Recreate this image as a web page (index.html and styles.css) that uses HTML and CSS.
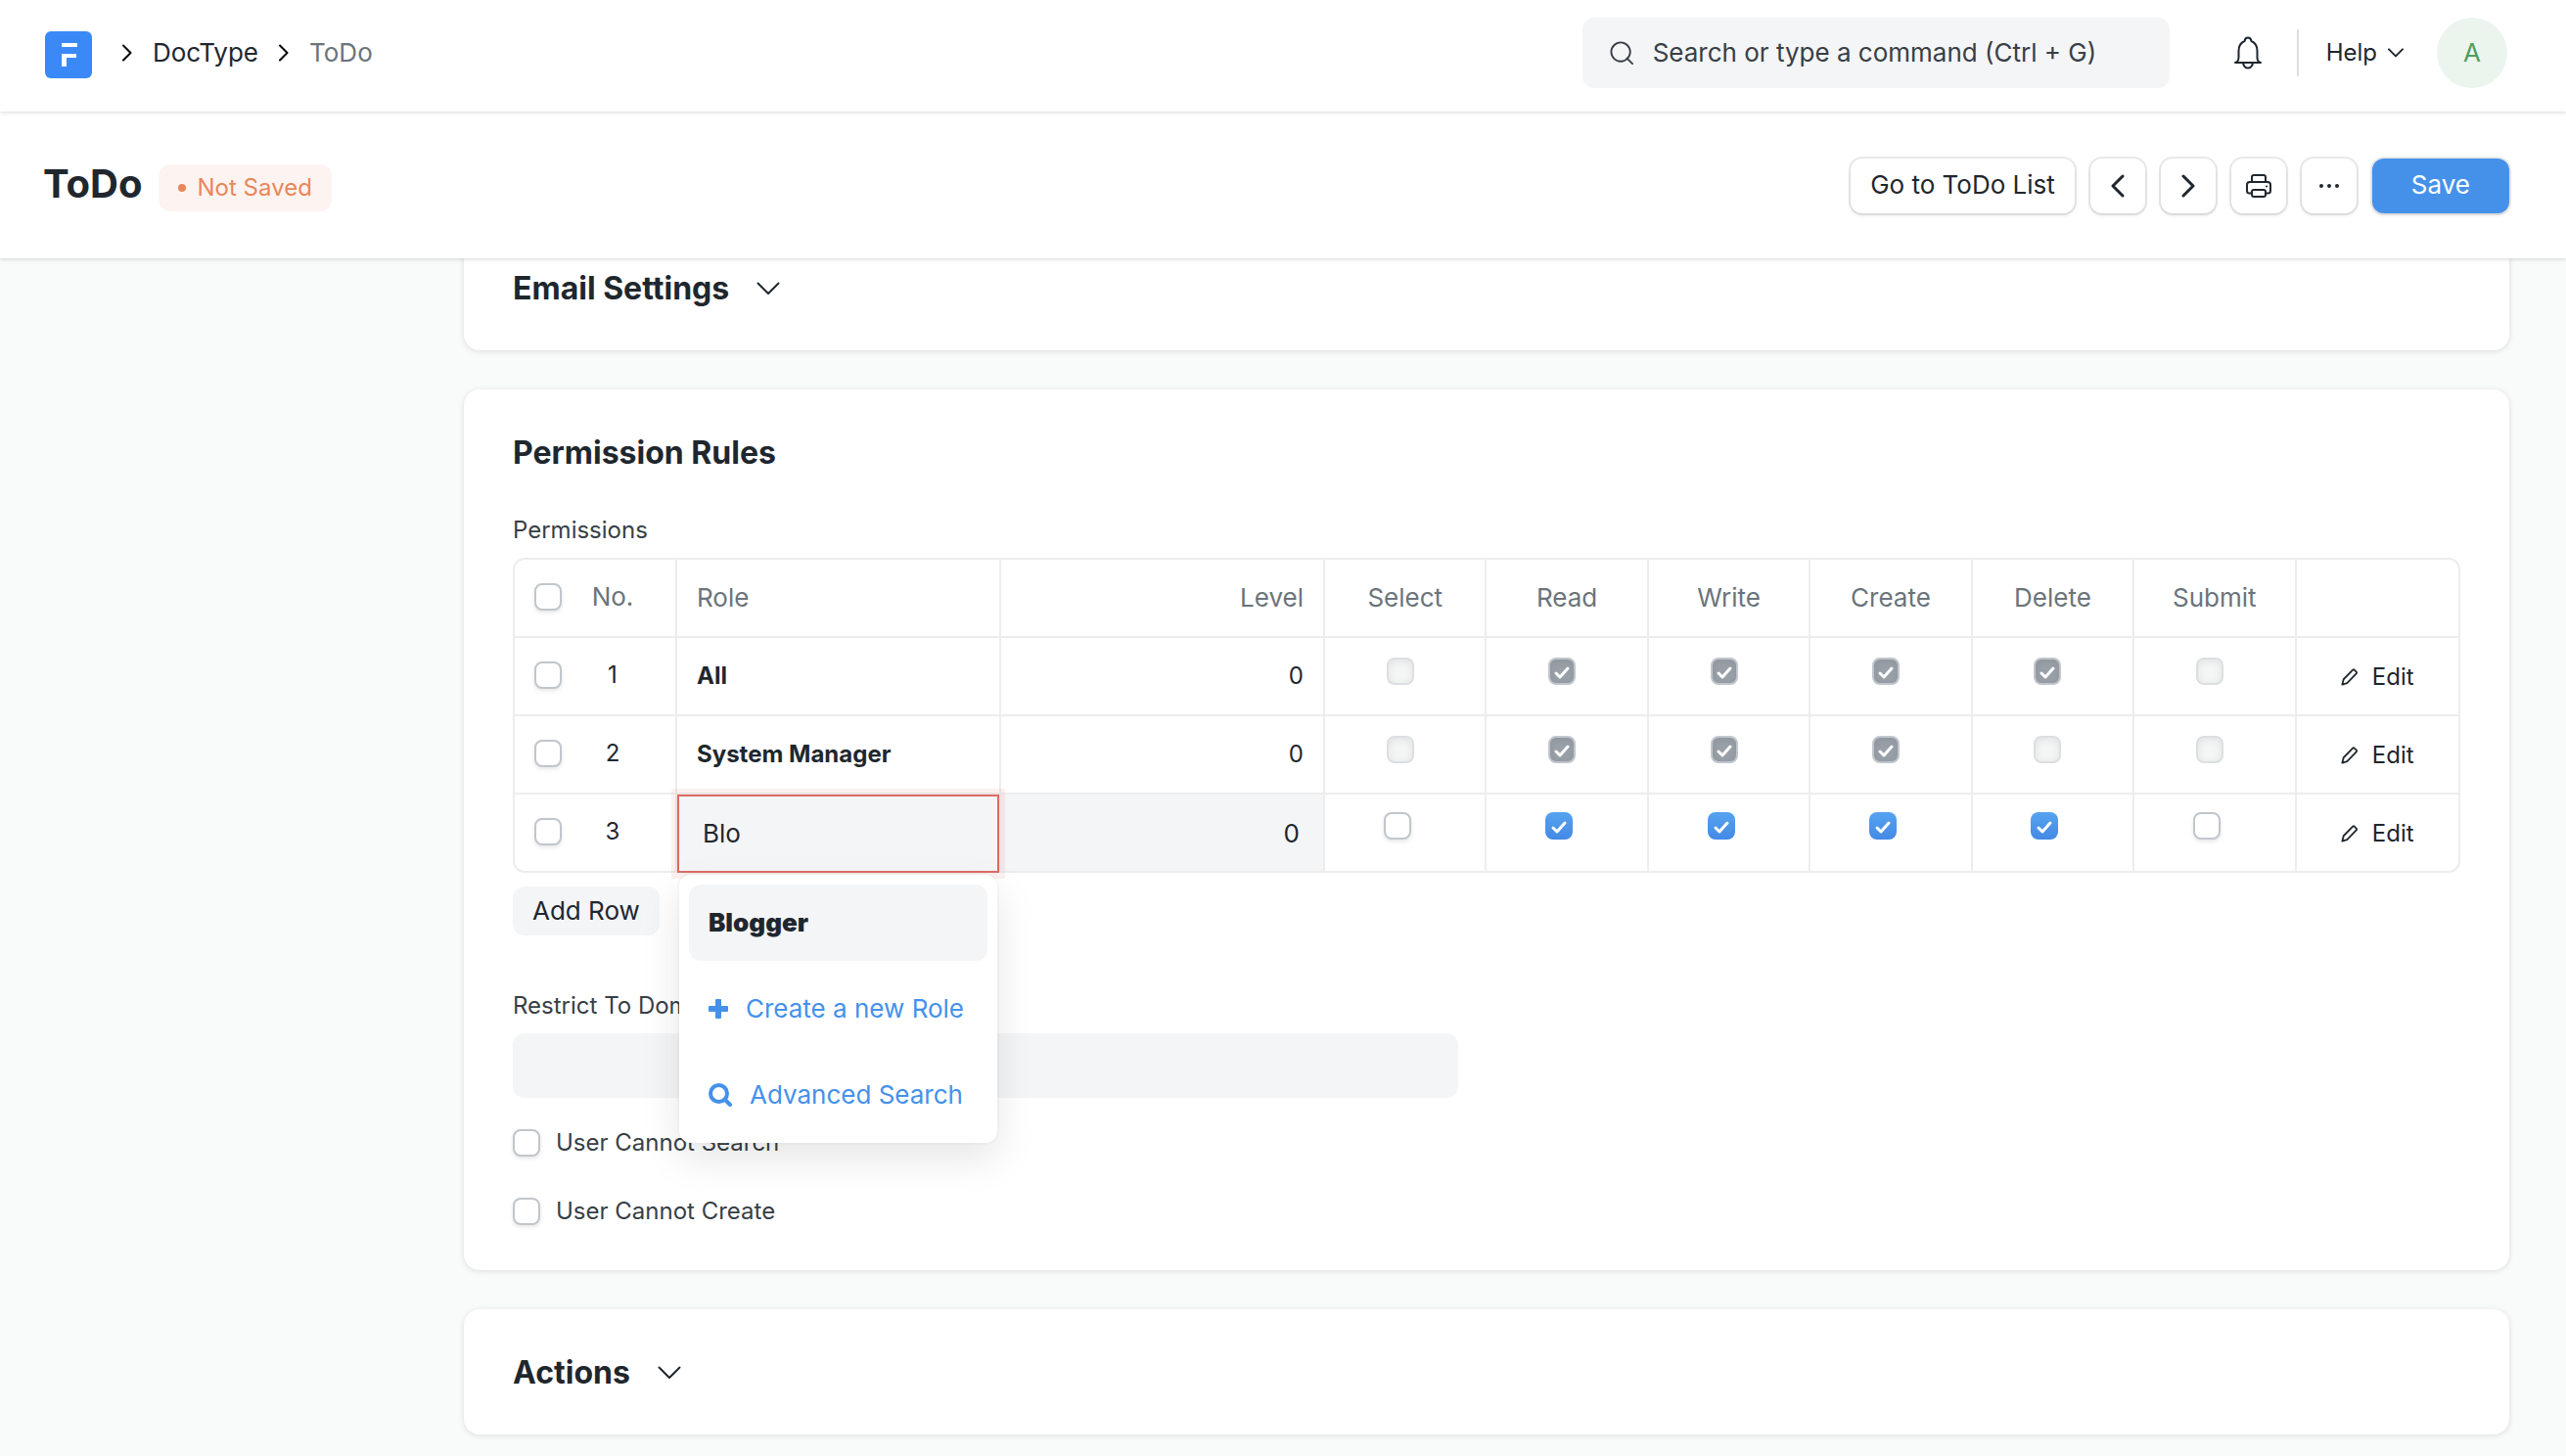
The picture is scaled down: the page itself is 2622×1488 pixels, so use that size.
FILE: index.html
```html
<!DOCTYPE html>
<html lang="en">
<head>
    <meta charset="UTF-8">
    <meta name="viewport" content="width=device-width, initial-scale=1.0">
    <title>ToDo</title>
    <link rel="stylesheet" href="styles.css">
</head>
<body>
    <!-- shared icons -->
    <svg class="sprite" aria-hidden="true">
        <symbol id="icon-right" viewBox="0 0 10 18"><path d="M1 1.5L8.5 9L1 16.5"/></symbol>
        <symbol id="icon-down" viewBox="0 0 24 14"><path d="M1.5 1.5L12 12L22.5 1.5"/></symbol>
        <symbol id="icon-edit" viewBox="0 0 20 20"><path d="M1.5 18.5L3 12.5L13.5 1.8Q14.5 1 15.5 2L17.5 4Q18.3 5 17.5 6L7 16.8Z"/></symbol>
    </svg>

    <header class="navbar">
        <a href="#" class="logo" aria-label="Home">
            <svg width="48" height="48" viewBox="0 0 48 48">
                <rect width="48" height="48" rx="6" fill="#3b89f7"/>
                <path d="M17 12h16v4H17zM17 23h15v4H22v9h-5z" fill="#fff"/>
            </svg>
        </a>
        <nav class="breadcrumb">
            <svg class="icon crumb-arrow"><use href="#icon-right"/></svg>
            <a href="#">DocType</a>
            <svg class="icon crumb-arrow"><use href="#icon-right"/></svg>
            <a href="#" class="current">ToDo</a>
        </nav>
        <div class="search-bar">
            <svg class="icon" width="24" height="24" viewBox="0 0 26 26"><circle cx="12" cy="12" r="10.5"/><path d="M19 19L25 25"/></svg>
            <input type="text" placeholder="Search or type a command (Ctrl + G)" aria-label="Search">
        </div>
        <button class="bell" aria-label="Notifications">
            <svg class="icon" width="28" height="34" viewBox="0 0 28 34"><path d="M1 27H27Q23.500 26 23.500 22V15Q23.500 7.500 17.500 5Q17 1.500 14 1.500Q11 1.500 10.500 5Q4.500 7.500 4.500 15V22Q4.500 26 1 27ZM9 27.500Q10 32.500 14 32.500Q18 32.500 19 27.500"/></svg>
        </button>
        <span class="divider"></span>
        <button class="help">Help <svg class="icon help-arrow"><use href="#icon-down"/></svg></button>
        <button class="avatar">A</button>
    </header>

    <div class="page-head">
        <h1>ToDo</h1>
        <span class="indicator">Not Saved</span>
        <div class="page-actions">
            <button class="btn">Go to ToDo List</button>
            <button class="btn btn-icon" aria-label="Previous"><svg class="icon" width="14" height="24" viewBox="0 0 14 24"><path d="M12 2L2 12L12 22"/></svg></button>
            <button class="btn btn-icon" aria-label="Next"><svg class="icon" width="14" height="24" viewBox="0 0 14 24"><path d="M2 2L12 12L2 22"/></svg></button>
            <button class="btn btn-icon" aria-label="Print"><svg class="icon print" width="28" height="26" viewBox="0 0 28 26"><path d="M7 9V4Q7 2 9 2H19Q21 2 21 4V9M7 20.500H4.500Q2 20.500 2 18V12Q2 9 5 9H23Q26 9 26 12V18Q26 20.500 23.500 20.500H21M9 17H19Q21 17 21 19V22Q21 24 19 24H9Q7 24 7 22V19Q7 17 9 17Z"/><path d="M22 13.500h.1"/></svg></button>
            <button class="btn btn-icon" aria-label="Menu"><svg width="22" height="6" viewBox="0 0 22 6"><circle cx="3" cy="3" r="2"/><circle cx="11" cy="3" r="2"/><circle cx="19" cy="3" r="2"/></svg></button>
            <button class="btn btn-primary">Save</button>
        </div>
    </div>

    <main class="form-layout">
        <section class="card">
            <h2>Email Settings <svg class="icon section-arrow"><use href="#icon-down"/></svg></h2>
        </section>

        <section class="card">
            <h2>Permission Rules</h2>
            <div class="card-body">
                <div class="label" id="permissions-label">Permissions</div>
                <table class="grid" aria-labelledby="permissions-label">
                    <colgroup>
                        <col class="index">
                        <col class="wide">
                        <col class="wide">
                        <col span="7">
                    </colgroup>
                    <thead>
                        <tr>
                            <th><div class="row-index"><input type="checkbox" aria-label="Select all"><span>No.</span></div></th>
                            <th class="role">Role</th>
                            <th class="level">Level</th>
                            <th>Select</th>
                            <th>Read</th>
                            <th>Write</th>
                            <th>Create</th>
                            <th>Delete</th>
                            <th>Submit</th>
                            <th></th>
                        </tr>
                    </thead>
                    <tbody>
                        <tr>
                            <td><div class="row-index"><input type="checkbox" aria-label="Row 1"><span>1</span></div></td>
                            <td class="role">All</td>
                            <td class="level">0</td>
                            <td class="check"><input type="checkbox" aria-label="Select" disabled></td>
                            <td class="check"><input type="checkbox" aria-label="Read" checked disabled></td>
                            <td class="check"><input type="checkbox" aria-label="Write" checked disabled></td>
                            <td class="check"><input type="checkbox" aria-label="Create" checked disabled></td>
                            <td class="check"><input type="checkbox" aria-label="Delete" checked disabled></td>
                            <td class="check"><input type="checkbox" aria-label="Submit" disabled></td>
                            <td><button class="edit"><svg class="icon"><use href="#icon-edit"/></svg>Edit</button></td>
                        </tr>
                        <tr>
                            <td><div class="row-index"><input type="checkbox" aria-label="Row 2"><span>2</span></div></td>
                            <td class="role">System Manager</td>
                            <td class="level">0</td>
                            <td class="check"><input type="checkbox" aria-label="Select" disabled></td>
                            <td class="check"><input type="checkbox" aria-label="Read" checked disabled></td>
                            <td class="check"><input type="checkbox" aria-label="Write" checked disabled></td>
                            <td class="check"><input type="checkbox" aria-label="Create" checked disabled></td>
                            <td class="check"><input type="checkbox" aria-label="Delete" disabled></td>
                            <td class="check"><input type="checkbox" aria-label="Submit" disabled></td>
                            <td><button class="edit"><svg class="icon"><use href="#icon-edit"/></svg>Edit</button></td>
                        </tr>
                        <tr class="editing">
                            <td><div class="row-index"><input type="checkbox" aria-label="Row 3"><span>3</span></div></td>
                            <td class="role">
                                <div class="link-field">
                                    <input type="text" class="role-input" value="Blo" aria-label="Role">
                                    <ul class="awesomplete">
                                        <li class="selected"><a href="#">Blogger</a></li>
                                        <li><a href="#"><svg width="20" height="22" viewBox="0 0 20 22"><path d="M7 2Q7 1 8 1H12Q13 1 13 2V8H19Q20 8 20 9V13Q20 14 19 14H13V20Q13 21 12 21H8Q7 21 7 20V14H1Q0 14 0 13V9Q0 8 1 8H7Z"/></svg>Create a new Role</a></li>
                                        <li><a href="#"><svg class="thick" width="24" height="24" viewBox="0 0 24 24"><circle cx="10.500" cy="10.500" r="8.500"/><path d="M17 17L22 22"/></svg>Advanced Search</a></li>
                                    </ul>
                                </div>
                            </td>
                            <td class="level"><input type="text" class="level-input" value="0" aria-label="Level"></td>
                            <td class="check"><input type="checkbox" aria-label="Select"></td>
                            <td class="check"><input type="checkbox" aria-label="Read" checked></td>
                            <td class="check"><input type="checkbox" aria-label="Write" checked></td>
                            <td class="check"><input type="checkbox" aria-label="Create" checked></td>
                            <td class="check"><input type="checkbox" aria-label="Delete" checked></td>
                            <td class="check"><input type="checkbox" aria-label="Submit"></td>
                            <td><button class="edit"><svg class="icon"><use href="#icon-edit"/></svg>Edit</button></td>
                        </tr>
                    </tbody>
                </table>
                <button class="add-row">Add Row</button>

                <div class="form-column">
                    <label class="label" for="restrict">Restrict To Domain</label>
                    <input type="text" id="restrict" class="control">
                    <label class="checkbox"><input type="checkbox">User Cannot Search</label>
                    <label class="checkbox"><input type="checkbox">User Cannot Create</label>
                </div>
            </div>
        </section>

        <section class="card">
            <h2>Actions <svg class="icon section-arrow"><use href="#icon-down"/></svg></h2>
        </section>
    </main>
</body>
</html>
```

FILE: styles.css
```css
/* --- General Setup & Theme --- */
:root {
    --bg-color: #f9fafa;
    --text-color: #1f272e;
    --text-light: #383f46;
    --text-muted: #6b747b;
    --control-bg: #f4f5f7;
    --border-color: #ededed;
    --checkbox-border: #c0c6cc;
    --primary: #4591ea;
    --danger: #dd6b64;
}
* { box-sizing: border-box; }
body {
    margin: 0;
    background-color: var(--bg-color);
    color: var(--text-color);
    font-family: Inter, sans-serif;
    font-size: 26px;
    line-height: 36px;
    overflow-x: hidden;
}
a {
    color: inherit;
    text-decoration: none;
}
button, input {
    font: inherit;
    color: inherit;
    border: none;
    background: none;
    padding: 0;
    margin: 0;
}
input:focus { outline: none; }
button { cursor: pointer; }
svg { flex: none; }
.sprite {
    position: absolute;
    width: 0;
    height: 0;
}
.icon {
    fill: none;
    stroke: var(--text-color);
    stroke-width: 2;
    stroke-linecap: round;
    stroke-linejoin: round;
}

/* --- Navbar --- */
.navbar {
    position: relative;
    z-index: 3;
    display: flex;
    align-items: center;
    height: 114px;
    padding: 0 60px 6px 46px;
    background: #fff;
    box-shadow: 0 1px 4px rgba(0, 0, 0, 0.16);
}
.logo { height: 44px; }
.breadcrumb {
    display: flex;
    align-items: center;
    gap: 21px;
    margin: 0 auto 0 31px;
}
.crumb-arrow {
    width: 10px;
    height: 18px;
    stroke: #000;
}
.breadcrumb .current { color: var(--text-muted); }
.search-bar {
    display: flex;
    align-items: center;
    gap: 20px;
    width: 600px;
    height: 72px;
    padding: 0 28px;
    border-radius: 12px;
    background: var(--control-bg);
}
.search-bar .icon { stroke: var(--text-light); }
.search-bar input { flex: 1; }
.search-bar input::placeholder {
    color: var(--text-light);
    opacity: 1;
}
.bell {
    display: flex;
    margin-left: 66px;
}
.divider {
    width: 2px;
    height: 48px;
    margin: 0 28px 0 36px;
    background: #dcdfe1;
}
.help {
    display: flex;
    align-items: center;
    gap: 11px;
    font-size: 24px;
}
.help-arrow {
    width: 16px;
    height: 10px;
    stroke-width: 3;
}
.avatar {
    width: 72px;
    height: 72px;
    margin-left: 34px;
    border-radius: 50%;
    background: #ebf5ee;
    color: #4f9d5f;
}

/* --- Page Head --- */
.page-head {
    position: relative;
    z-index: 2;
    display: flex;
    align-items: center;
    height: 150px;
    padding: 2px 58px 0 44px;
    background: #fff;
    box-shadow: 0 1px 4px rgba(0, 0, 0, 0.16);
}
.page-head h1 {
    margin: 0 0 4px;
    font-size: 40px;
    line-height: 48px;
    font-weight: 700;
}
.indicator {
    display: flex;
    align-items: center;
    gap: 12px;
    height: 48px;
    margin: 4px auto 0 16px;
    padding: 0 20px;
    border-radius: 12px;
    background: #fdf4f1;
    color: #e9875a;
    font-size: 24px;
}
.indicator::before {
    content: "";
    width: 8px;
    height: 8px;
    border-radius: 50%;
    background: #e9875a;
}
.page-actions {
    display: flex;
    gap: 16px;
}
.btn {
    display: flex;
    align-items: center;
    justify-content: center;
    height: 56px;
    padding: 0 20px 2px;
    border-radius: 12px;
    background: #fff;
    box-shadow: 0 0 0 2px rgba(0, 0, 0, 0.08), 0 2px 4px rgba(0, 0, 0, 0.1);
}
.btn-icon {
    width: 56px;
    padding: 0;
}
.btn .icon { stroke-width: 3; }
.btn svg { fill: var(--text-color); }
.btn svg.icon { fill: none; }
.btn .print { stroke-width: 2; }
.btn-primary {
    padding: 0 40px 2px;
    background: var(--primary);
    color: #fff;
}

/* --- Form --- */
.form-layout {
    display: flex;
    flex-direction: column;
    gap: 40px;
    /* first card is scrolled partly under the page head */
    margin-top: -34px;
    padding: 0 58px 22px 474px;
}
.card {
    border-radius: 16px;
    background: #fff;
    box-shadow: 0 1px 6px rgba(0, 0, 0, 0.12);
}
.card h2 {
    display: flex;
    align-items: center;
    gap: 28px;
    height: 128px;
    margin: 0;
    padding: 2px 50px 0;
    font-size: 32px;
    font-weight: 700;
}
.section-arrow {
    width: 24px;
    height: 14px;
}
.card-body { padding: 0 50px 42px; }
.label {
    display: block;
    height: 44px;
    color: var(--text-light);
    font-size: 24px;
    line-height: 32px;
}

/* --- Checkboxes --- */
input[type="checkbox"] {
    appearance: none;
    flex: none;
    width: 28px;
    height: 28px;
    border: 2px solid var(--checkbox-border);
    border-radius: 8px;
    background: #fff;
    box-shadow: 0 2px 4px rgba(0, 0, 0, 0.1);
}
input[type="checkbox"]:checked {
    border: none;
    background: url("data:image/svg+xml,%3Csvg xmlns='http://www.w3.org/2000/svg' viewBox='0 0 28 28'%3E%3Cpath d='M8 16L12 20L20 11' fill='none' stroke='white' stroke-width='3' stroke-linecap='round' stroke-linejoin='round'/%3E%3C/svg%3E"), linear-gradient(#56a3ef, #4389e6);
    box-shadow: none;
}
input[type="checkbox"]:disabled {
    border: 2px solid #dcdfe2;
    background: #f4f6f5;
    box-shadow: inset 0 2px 8px rgba(0, 0, 0, 0.08);
}
input[type="checkbox"]:checked:disabled {
    border: 2px solid var(--checkbox-border);
    background: url("data:image/svg+xml,%3Csvg xmlns='http://www.w3.org/2000/svg' viewBox='2 2 24 24'%3E%3Cpath d='M8 16L12 20L20 11' fill='none' stroke='white' stroke-width='3' stroke-linecap='round' stroke-linejoin='round'/%3E%3C/svg%3E"), #9aa0a8;
}

/* --- Permissions Grid --- */
.grid {
    width: 100%;
    table-layout: fixed;
    border: 2px solid var(--border-color);
    border-radius: 12px;
    border-spacing: 0;
    font-size: 24px;
}
.grid col.index { width: 166px; }
.grid col.wide { width: calc(100% / 6); }
.grid th, .grid td {
    height: 80px;
    padding: 0;
    border-right: 2px solid var(--border-color);
    border-bottom: 2px solid var(--border-color);
    text-align: center;
}
.grid th:last-child, .grid td:last-child { border-right: none; }
.grid tbody tr:last-child td {
    height: 78px;
    border-bottom: none;
}
.grid th {
    color: var(--text-muted);
    font-size: 26px;
    font-weight: 400;
}
.row-index {
    display: flex;
    align-items: center;
    padding: 0 0 2px 20px;
}
.row-index span { width: 104px; }
.grid .role {
    padding-left: 20px;
    text-align: left;
}
.grid td.role { font-weight: 700; }
.grid .level {
    padding-right: 20px;
    text-align: right;
}
.grid .check { padding: 0 10px 10px 0; }
.grid .check input {
    display: block;
    margin: 0 auto;
}
.grid .editing .check { padding: 0 16px 14px 0; }
.grid .editing .role, .grid .editing .level {
    padding: 0;
    font-size: 26px;
    font-weight: 400;
}
.link-field { position: relative; }
.role-input {
    display: block;
    width: 100%;
    height: 80px;
    margin-bottom: -2px;
    padding: 0 24px 2px;
    border: 2px solid var(--danger);
    background: var(--control-bg);
    box-shadow: 0 0 0 6px rgba(221, 80, 80, 0.08);
}
.level-input {
    display: block;
    width: 100%;
    height: 78px;
    padding: 0 24px;
    background: var(--control-bg);
    text-align: right;
}
.edit {
    display: flex;
    align-items: center;
    gap: 14px;
    margin: 0 auto;
    padding-top: 2px;
    font-size: 24px;
}
.edit .icon {
    width: 18px;
    height: 18px;
}

/* --- Role Dropdown --- */
.awesomplete {
    position: absolute;
    z-index: 1;
    top: 82px;
    left: 2px;
    right: 2px;
    display: flex;
    flex-direction: column;
    gap: 10px;
    margin: 0;
    padding: 10px;
    border-radius: 12px;
    background: #fff;
    box-shadow: 0 0 0 2px rgba(0, 0, 0, 0.02), 0 16px 40px rgba(0, 0, 0, 0.1);
    list-style: none;
}
.awesomplete a {
    display: flex;
    align-items: center;
    gap: 18px;
    height: 78px;
    padding: 0 20px;
    border-radius: 12px;
    color: var(--primary);
    white-space: nowrap;
}
.awesomplete .selected a {
    background: var(--control-bg);
    color: var(--text-color);
    font-weight: 900;
}
.awesomplete svg { fill: var(--primary); }
.awesomplete .thick {
    fill: none;
    stroke: var(--primary);
    stroke-width: 4;
    stroke-linecap: round;
}

.add-row {
    height: 50px;
    margin-top: 14px;
    padding: 0 20px;
    border-radius: 12px;
    background: var(--control-bg);
}

/* --- Fields --- */
.form-column {
    width: calc(50% - 29px);
    margin-top: 56px;
}
.control {
    display: block;
    width: 100%;
    height: 66px;
    padding: 0 20px;
    border-radius: 12px;
    background: var(--control-bg);
}
.checkbox {
    display: flex;
    align-items: center;
    gap: 16px;
    height: 36px;
    margin-top: 34px;
    color: var(--text-light);
    font-size: 24px;
}
.control + .checkbox { margin-top: 28px; }
```
